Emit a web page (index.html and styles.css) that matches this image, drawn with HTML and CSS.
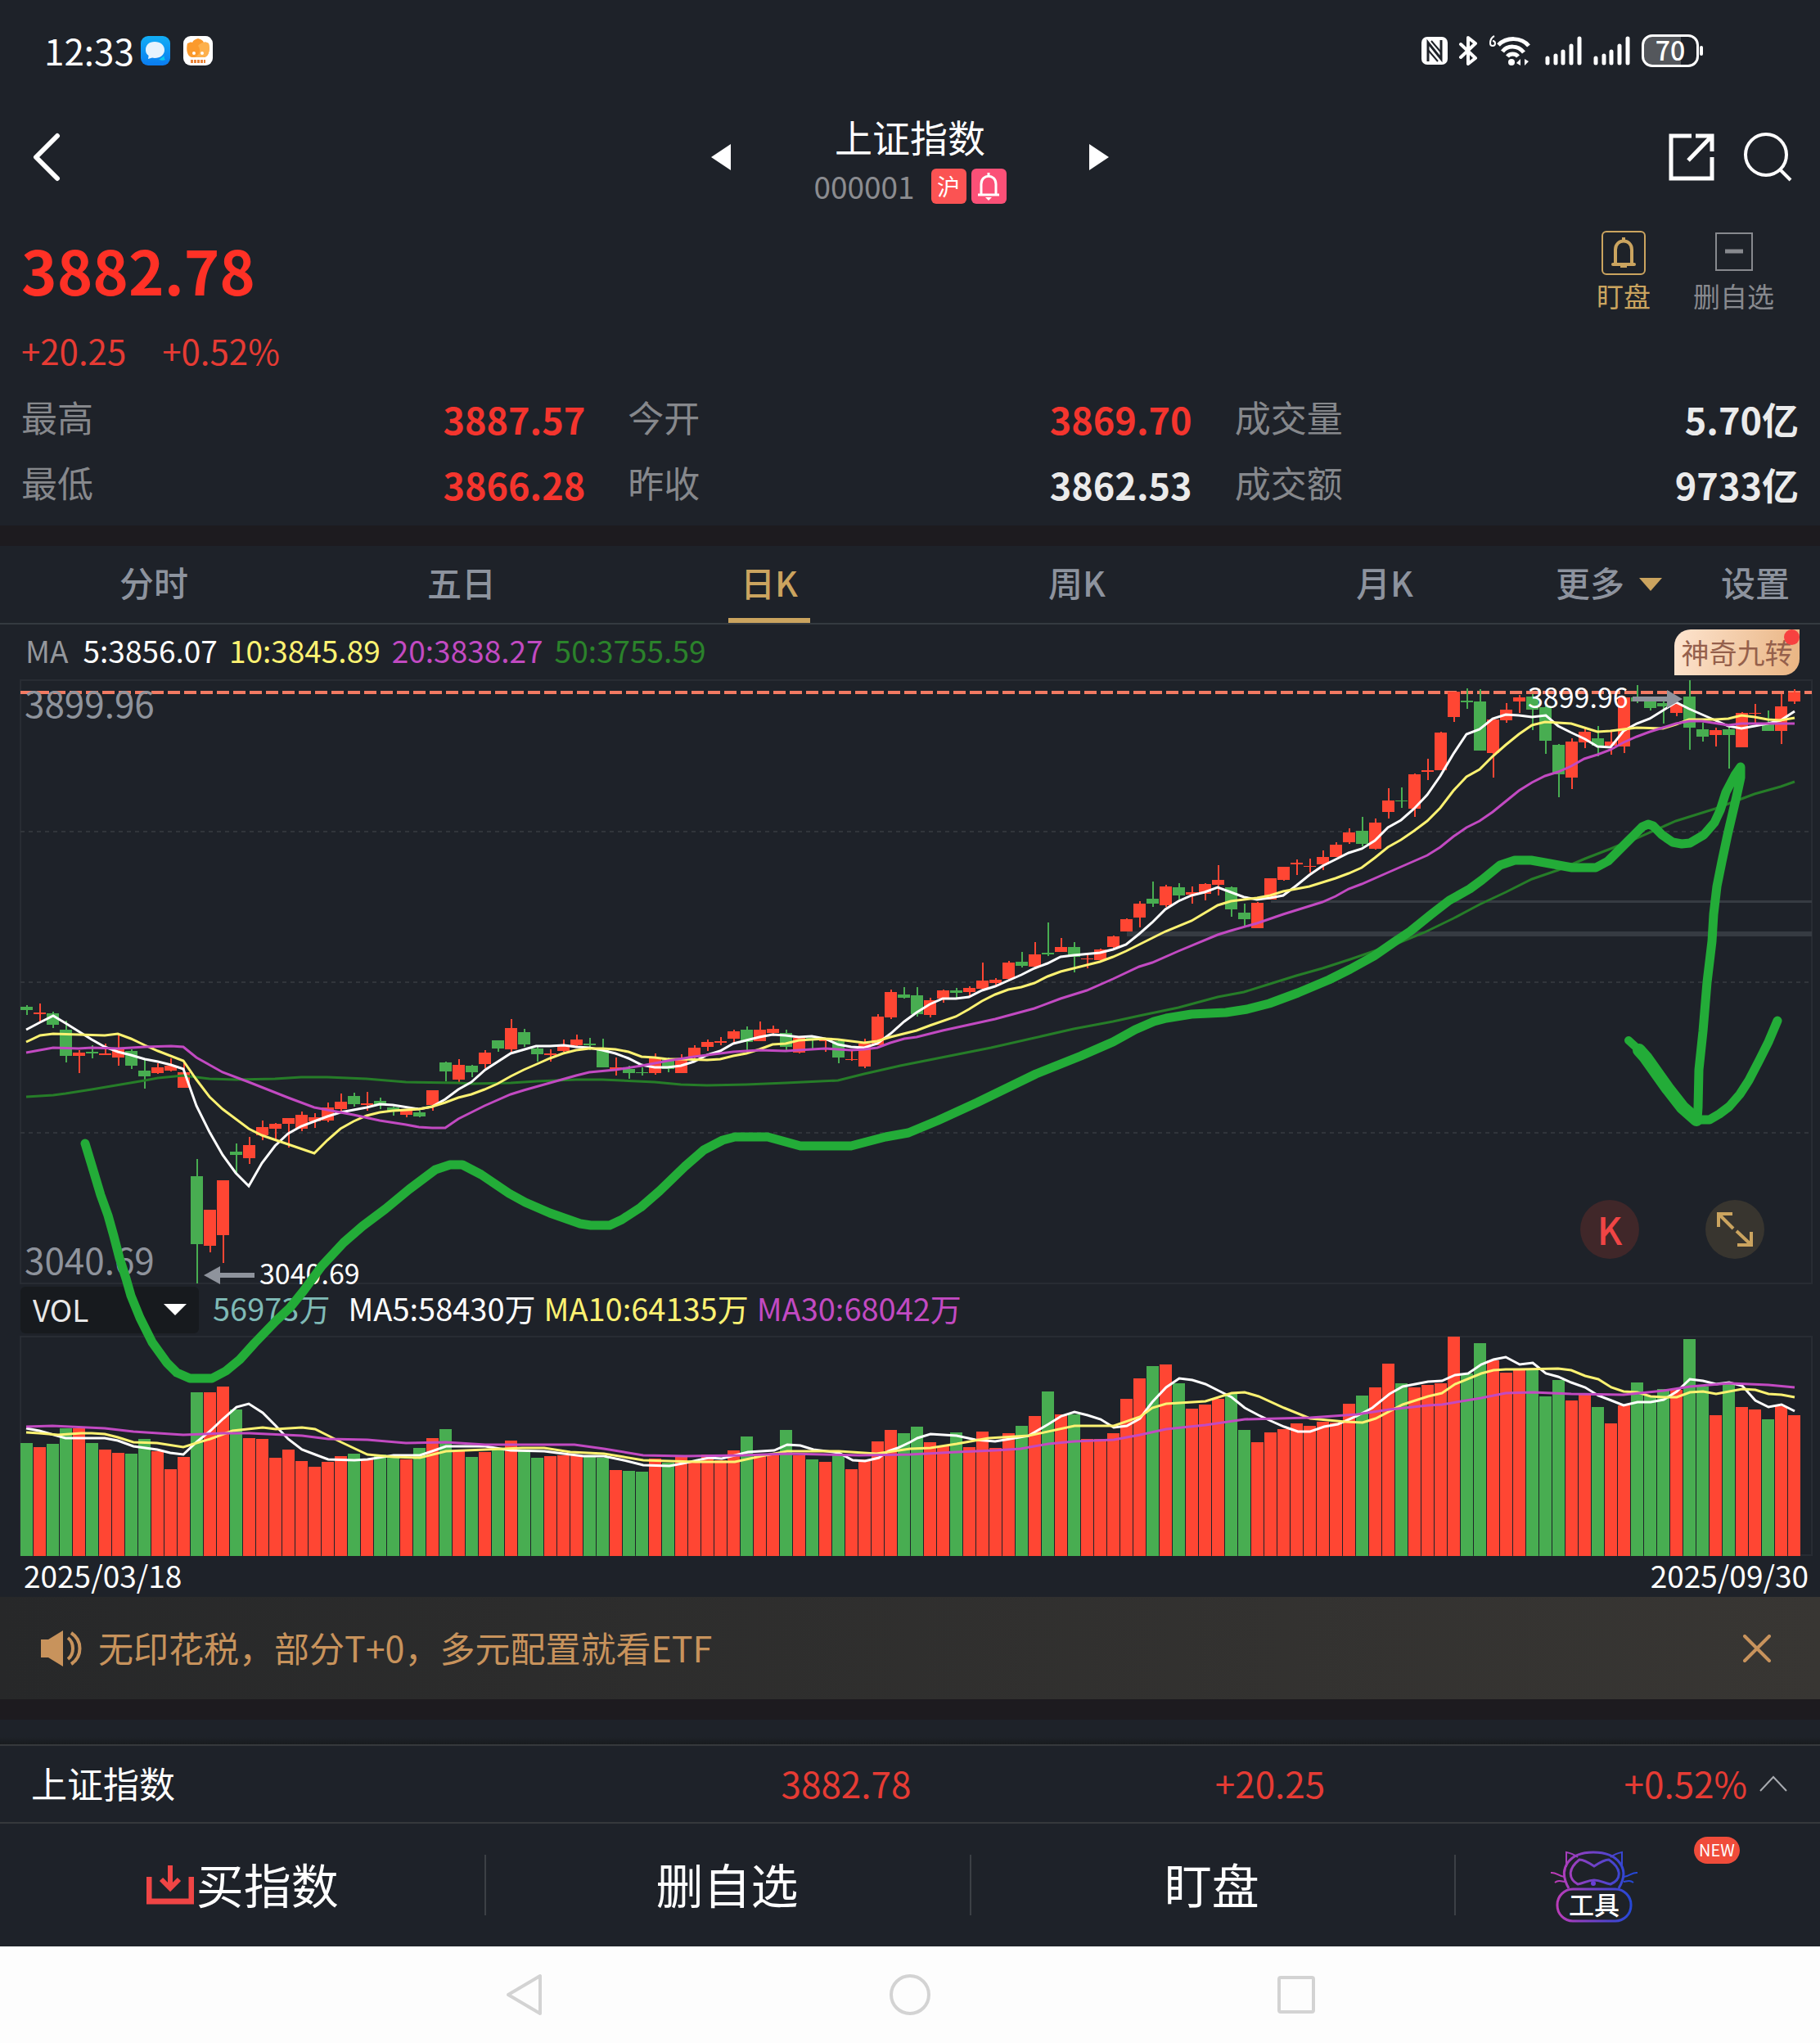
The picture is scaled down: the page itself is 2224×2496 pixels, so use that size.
FILE: index.html
```html
<!DOCTYPE html>
<html lang="zh-CN">
<head>
<meta charset="utf-8">
<meta name="viewport" content="width=device-width, initial-scale=1">
<title>上证指数 000001</title>
<link rel="stylesheet" href="styles.css">
</head>
<body>
<div class="status">
  <div class="status-group">
    <span class="clock">12:33</span>
    <svg class="app-icon" viewBox="0 0 36 36" aria-hidden="true">
      <defs><linearGradient id="msg" x1="0" y1="0" x2="0" y2="1"><stop offset="0" stop-color="#12aef5"/><stop offset="1" stop-color="#0a7cf0"/></linearGradient></defs>
      <rect width="36" height="36" rx="9" fill="url(#msg)"/>
      <path d="M22 29c4 1 6 1 8 0-1-1-2-3-1-5z" fill="#0cc8f0"/>
      <path d="M17 7c7 0 12 4 12 10s-5 10-12 10c-1 0-2 0-3-.4L9 28l.6-4C7 22 6 20 6 17 6 11 10 7 17 7z" fill="#e6f3fd"/>
    </svg>
    <svg class="app-icon" viewBox="0 0 36 36" aria-hidden="true">
      <rect width="36" height="36" rx="9" fill="#fff"/>
      <path d="M5 9c3-1 4-2 6-1 1-3 4-4 7-5 3 1 6 2 7 5 2-1 4 0 6 1 2 8 0 17-6 17H11C5 26 3 17 5 9z" fill="#fb9a2c"/>
      <path d="M18 12c4-5 9-5 13-3 2 8 0 17-6 17H14c6-3 8-9 4-14z" fill="#fdb04c"/>
      <circle cx="13" cy="21" r="2" fill="#fff"/><circle cx="23" cy="21" r="2" fill="#fff"/>
      <path d="M9 31h18" stroke="#e9843a" stroke-width="4" stroke-dasharray="3 1"/>
    </svg>
  </div>
  <div class="status-group status-right">
    <svg width="32" height="36" viewBox="0 0 32 36" aria-hidden="true"><rect y="1" width="32" height="34" rx="7" fill="#fff"/><path d="M8 31V8l16 20V5" fill="none" stroke="#1e2229" stroke-width="3"/><path d="M12 6l12 14M8 17l12 14" stroke="#1e2229" stroke-width="2"/></svg>
    <svg width="24" height="36" viewBox="0 0 24 36" fill="none" stroke="#fff" stroke-width="4" stroke-linejoin="round" stroke-linecap="round" aria-hidden="true"><path d="M3 10l18 17-9 7V2l9 7L3 26"/></svg>
    <svg width="56" height="38" viewBox="0 0 56 38" fill="none" stroke="#fff" stroke-width="5" aria-hidden="true"><path d="M7 1C3 3 2 6 2 10a3 3 0 1 0 3-3" stroke-width="2"/><path d="M12 12c10-10 28-10 37 1M17 20c6-8 19-8 26 1M23 26c3-4 10-4 13 0"/><circle cx="28" cy="33" r="4" fill="#fff" stroke="none"/><path d="M34 34l5-5v8zM49 32l-5 5v-8z" fill="#fff" stroke="none"/></svg>
    <svg width="46" height="36" viewBox="0 0 46 36" stroke="#fff" stroke-width="5" stroke-linecap="round" aria-hidden="true"><path d="M3 27v6M13 24v9M22 19v14M32 12v21M42 3v30"/></svg>
    <svg width="46" height="36" viewBox="0 0 46 36" stroke="#fff" stroke-width="5" stroke-linecap="round" aria-hidden="true"><path d="M3 27v6M13 24v9M22 19v14M32 12v21M42 3v30"/></svg>
    <span class="battery">70</span>
  </div>
</div>

<header class="header">
  <button class="icon-btn" aria-label="返回"><svg width="40" height="60" viewBox="-6 0 40 60" fill="none" stroke="#fff" stroke-width="6" stroke-linecap="round" stroke-linejoin="round"><path d="M30 4L4 30l26 26"/></svg></button>
  <div class="switcher">
    <button class="icon-btn" aria-label="上一个"><svg width="24" height="32" viewBox="0 0 24 32" fill="#fff"><path d="M24 0v32L0 16z"/></svg></button>
    <div class="name-block">
      <h1 class="name">上证指数</h1>
      <div class="code-row">
        <span class="code">000001</span>
        <span class="badges">
        <span class="market">沪</span>
        <span class="market alert"><svg width="32" height="36" viewBox="0 0 32 36" fill="none" stroke="#fff" stroke-width="3"><path d="M3 29h26M7 28V16c0-13 18-13 18 0v12"/><path d="M16 2v5"/><path d="M12 32h8l-4 4z" fill="#fff" stroke="none"/></svg></span>
        </span>
      </div>
    </div>
    <button class="icon-btn" aria-label="下一个"><svg width="24" height="32" viewBox="0 0 24 32" fill="#fff"><path d="M0 0v32l24-16z"/></svg></button>
  </div>
  <div class="header-tools">
    <button class="icon-btn" aria-label="分享"><svg width="58" height="60" viewBox="0 0 58 60" fill="none" stroke="#fff" stroke-width="5"><path d="M29 4H4v52h50V30M34 4h20v19M54 4L25 34"/></svg></button>
    <button class="icon-btn" aria-label="搜索"><svg width="60" height="60" viewBox="0 0 60 60" fill="none" stroke="#fff" stroke-width="4"><circle cx="28" cy="27" r="25"/><path d="M45 45l13 13"/></svg></button>
  </div>
</header>

<section class="quote">
  <div class="quote-top">
    <div>
      <div class="price">3882.78</div>
      <div class="change"><span>+20.25</span><span>+0.52%</span></div>
    </div>
    <div class="actions">
      <button class="action gold"><svg width="54" height="54" viewBox="0 0 54 54" fill="none" stroke="currentColor" stroke-width="4"><rect x="1" y="1" width="52" height="52" rx="5" stroke-width="2"/><path d="M14 41h26M17 40V23c0-14 20-14 20 0v17" stroke-linecap="round"/><path d="M27 8v5M23 43h8"/></svg>盯盘</button>
      <button class="action"><svg width="54" height="54" viewBox="0 0 54 54" fill="none" stroke="currentColor"><rect x="5" y="3" width="44" height="45" stroke-width="2"/><path d="M16 25h22" stroke-width="5"/></svg>删自选</button>
    </div>
  </div>
  <dl class="stats">
    <div class="stat"><dt>最高</dt><dd class="up">3887.57</dd></div>
    <div class="stat"><dt>今开</dt><dd class="up">3869.70</dd></div>
    <div class="stat"><dt>成交量</dt><dd>5.70亿</dd></div>
    <div class="stat"><dt>最低</dt><dd class="up">3866.28</dd></div>
    <div class="stat"><dt>昨收</dt><dd>3862.53</dd></div>
    <div class="stat"><dt>成交额</dt><dd>9733亿</dd></div>
  </dl>
</section>

<nav class="tabs">
  <button class="tab">分时</button>
  <button class="tab">五日</button>
  <button class="tab active">日K</button>
  <button class="tab">周K</button>
  <button class="tab">月K</button>
  <button class="tab">更多<svg class="caret" width="28" height="16" viewBox="0 0 28 16" fill="#cba45f"><path d="M0 0h28L14 16z"/></svg></button>
  <button class="tab settings">设置</button>
</nav>

<main class="chart">
  <div class="legend">
    <span class="muted">MA</span><span>5:3856.07</span><span class="yellow">10:3845.89</span><span class="purple">20:3838.27</span><span class="green">50:3755.59</span>
    <button class="magic">神奇九转<i class="dot"></i></button>
  </div>
  <div class="price-panel">
    <svg class="plot" id="price" viewBox="0 831 2224 737"></svg>
    <div class="float-tools">
      <button class="round round-k">K</button>
      <button class="round round-full" aria-label="全屏"><svg width="46" height="46" viewBox="0 0 46 46" fill="none" stroke="#cba45f" stroke-width="4"><path d="M3 20V4h17M4 5l17 17M25 25l17 16M26 42h17V26"/></svg></button>
    </div>
  </div>
  <div class="vol-head">
    <div class="vol-pick">
      <select class="vol-select" aria-label="指标"><option>VOL</option><option>MACD</option><option>KDJ</option></select>
      <svg class="vol-caret" width="28" height="14" viewBox="0 0 28 14" fill="#fff"><path d="M0 0h28L14 14z"/></svg>
    </div>
    <div class="vol-values"><span class="teal">56973万</span><span>MA5:58430万</span><span class="yellow">MA10:64135万</span><span class="purple">MA30:68042万</span></div>
  </div>
  <svg class="plot" id="volume" viewBox="0 1633 2224 268"></svg>
  <div class="dates"><time>2025/03/18</time><time>2025/09/30</time></div>
  <svg class="sketch" id="sketch" viewBox="0 763 2224 1188" aria-hidden="true"></svg>
</main>

<aside class="banner">
  <svg width="50" height="46" viewBox="0 0 50 46" fill="#c8935c"><path d="M0 12h9L27 1v44L9 34H0z"/><path d="M33 10c8 6 8 20 0 26M37 4c14 9 14 29 0 38" fill="none" stroke="#c8935c" stroke-width="4"/></svg>
  <a class="banner-link" href="#etf">无印花税，部分T+0，多元配置就看ETF</a>
  <button class="icon-btn" aria-label="关闭"><svg width="34" height="34" viewBox="0 0 34 34" stroke="#c8935c" stroke-width="4" stroke-linecap="round"><path d="M2 2l30 30M32 2L2 32"/></svg></button>
</aside>
<div class="spacer"></div>

<section class="ticker">
  <span class="ticker-name">上证指数</span><span class="mid">3882.78</span><span class="mid">+20.25</span>
  <span class="ticker-end">+0.52%<svg width="34" height="20" viewBox="0 0 34 20" fill="none" stroke="#a8abb0" stroke-width="2"><path d="M1 19L17 2l16 17"/></svg></span>
</section>

<footer class="dock">
  <button class="dock-btn"><svg width="58" height="50" viewBox="0 0 58 50" fill="none" stroke="#f04545" stroke-width="7"><path d="M3 16v30h52V16"/><path d="M29 2v26M18 19l11 11 11-11" stroke-width="6"/></svg>买指数</button>
  <button class="dock-btn">删自选</button>
  <button class="dock-btn">盯盘</button>
  <button class="dock-btn dock-tool">
    <svg width="106" height="88" viewBox="0 0 106 88" fill="none" stroke="url(#cat)" stroke-width="3">
      <defs><linearGradient id="cat" gradientUnits="userSpaceOnUse" x1="6" y1="0" x2="98" y2="0"><stop offset="0" stop-color="#bd3cb8"/><stop offset="1" stop-color="#2547d6"/></linearGradient></defs>
      <path d="M22 46C8 22 22 2 52 2s46 20 31 44"/>
      <path d="M19 20V2c6 1 10 3 14 6M87 20V2c-6 1-10 3-14 6" stroke-width="2"/>
      <path d="M35 11c6 0 12 4 18 8 6-4 12-8 18-8 16 11 16 24 2 30-8-1-12-5-20-5s-12 4-20 5C21 34 21 22 35 11z"/>
      <path d="M0 27c7-1 8 4 17 5M5 39c4-3 7-2 12-1M106 27c-7-1-8 4-17 5M101 39c-4-3-7-2-12-1" stroke-width="2"/>
      <circle cx="52" cy="40" r="3" fill="#6a3fd8" stroke="none"/>
      <rect x="8" y="47" width="90" height="39" rx="19"/>
      <text x="53" y="78" class="cat-text">工具</text>
    </svg>
    <span class="new">NEW</span>
  </button>
</footer>

<nav class="sysnav">
  <button class="icon-btn" aria-label="后退"><svg width="48" height="52" viewBox="0 0 48 52" fill="none" stroke="#d3d3d3" stroke-width="4" stroke-linejoin="round"><path d="M44 3v46L5 26z"/></svg></button>
  <button class="icon-btn" aria-label="主页"><svg width="50" height="52" viewBox="0 0 50 52" fill="none" stroke="#d3d3d3" stroke-width="4"><circle cx="25" cy="26" r="23"/></svg></button>
  <button class="icon-btn" aria-label="多任务"><svg width="48" height="52" viewBox="0 0 48 52" fill="none" stroke="#d3d3d3" stroke-width="4"><rect x="3" y="5" width="42" height="42" rx="2"/></svg></button>
</nav>
<script src="chart.js"></script>
</body>
</html>
```
FILE: styles.css
```css
* { box-sizing: border-box; }
body {
  margin: 0;
  background: #1e2229;
  color: #fff;
  font: 400 37px/1.3 "Noto Sans CJK SC", "Noto Sans", sans-serif;
}
button {
  margin: 0;
  padding: 0;
  border: 0;
  background: none;
  color: inherit;
  font: inherit;
}
svg { display: block; flex: none; }
.icon-btn { display: flex; }

.status {
  display: flex;
  justify-content: space-between;
  align-items: center;
  height: 124px;
  padding: 0 148px 0 54px;
}
.status-group { display: flex; align-items: center; gap: 16px; }
.status-right { gap: 13px; }
.clock { font-size: 44px; line-height: 54px; margin-right: -8px; padding-bottom: 2px; }
.app-icon { width: 36px; height: 36px; }
.battery {
  position: relative;
  width: 70px;
  height: 40px;
  border: 3px solid #fff;
  border-radius: 13px;
  background: linear-gradient(90deg, #54575c 70%, #1e2229 70%);
  font-size: 32px;
  font-weight: 500;
  line-height: 30px;
  text-align: center;
}
.battery::after {
  content: "";
  position: absolute;
  left: 68px;
  top: 11px;
  width: 4px;
  height: 12px;
  border-radius: 2px;
  background: #fff;
}

.header {
  display: grid;
  grid-template-columns: 1fr auto 1fr;
  align-items: center;
  height: 136px;
  padding: 0 34px;
}
.switcher { display: flex; align-items: center; justify-content: space-between; width: 486px; }
.name-block { display: flex; flex-direction: column; align-items: center; gap: 6px; }
.name { margin: 0; font-size: 46px; font-weight: 400; line-height: 64px; }
.code-row { display: flex; align-items: center; gap: 20px; height: 46px; color: #8b8c90; }
.code { line-height: 44px; }
.badges { display: flex; gap: 6px; }
.market {
  display: flex;
  align-items: center;
  justify-content: center;
  width: 43px;
  height: 43px;
  border-radius: 6px;
  background: #fb5353;
  color: #fff;
  font-size: 28px;
  line-height: 40px;
}
.alert { background: #fb5077; }
.header-tools { display: flex; justify-content: flex-end; gap: 34px; }

.quote { padding: 0 26px 10px; }
.quote-top { display: flex; justify-content: space-between; height: 212px; }
.price { padding-top: 25px; color: #ff3126; font-size: 74px; font-weight: 700; line-height: 88px; }
.change { display: flex; gap: 44px; margin-top: 25px; color: #e63b34; font-size: 42px; line-height: 60px; }
.actions { display: flex; gap: 52px; padding: 22px 30px 0 0; align-items: flex-start; }
.action {
  display: flex;
  flex-direction: column;
  align-items: center;
  gap: 6px;
  color: #87898e;
  font-size: 33px;
  line-height: 38px;
}
.action.gold { color: #cba45f; }
.stats {
  display: grid;
  grid-template-columns: repeat(3, 1fr);
  column-gap: 52px;
  margin: 0;
}
.stat { display: flex; justify-content: space-between; height: 80px; font-size: 44px; }
dt { color: #86888c; line-height: 75px; }
dd { margin: 0; color: #ebebeb; font-size: 45px; font-weight: 700; line-height: 79px; }
.up { color: #f4352e; }

.tabs {
  display: grid;
  grid-template-columns: repeat(5, 376fr) 172fr 172fr;
  height: 121px;
  border-top: 25px solid #1d1b1f;
  border-bottom: 2px solid #343a40;
}
.tab {
  position: relative;
  display: flex;
  align-items: center;
  justify-content: center;
  gap: 18px;
  padding-bottom: 5px;
  color: #8d939e;
  font-size: 42px;
  font-weight: 500;
}
.caret { margin-top: 4px; }
.settings { justify-content: flex-end; padding-right: 37px; }
.active { color: #cba45f; }
.active::after {
  content: "";
  position: absolute;
  bottom: 0;
  width: 100px;
  height: 6px;
  background: #cba45f;
}

.chart { position: relative; }
.legend { display: flex; align-items: center; gap: 14px; height: 68px; padding: 0 25px 0 31px; }
.legend span { padding-bottom: 5px; }
.muted { margin-right: 4px; color: #94979c; }
.yellow { color: #fdf272; }
.purple { color: #c24ac2; }
.green { color: #2b822b; }
.teal { margin-right: 12px; color: #7fbab6; }
.magic {
  position: relative;
  width: 153px;
  height: 56px;
  margin-left: auto;
  border-radius: 20px 0;
  background: linear-gradient(100deg, #fde4cf, #e9b482);
  color: #95604c;
  font-size: 34px;
  line-height: 52px;
}
.dot {
  position: absolute;
  top: 0;
  right: 0;
  width: 19px;
  height: 19px;
  border-radius: 50%;
  background: #f74140;
}
.plot { width: 100%; height: auto; overflow: visible; }
.price-panel { position: relative; }
.float-tools { position: absolute; right: 68px; bottom: 30px; display: flex; gap: 81px; }
.round {
  display: flex;
  align-items: center;
  justify-content: center;
  width: 72px;
  height: 72px;
  border-radius: 50%;
}
.round-k { background: #402729; color: #f04545; padding-bottom: 3px; font-size: 46px; font-weight: 500; line-height: 66px; }
.round-full { background: #38352f; }
.vol-head { display: flex; align-items: center; height: 65px; padding-left: 25px; }
.vol-pick { position: relative; margin-right: 17px; }
.vol-select {
  display: block;
  appearance: none;
  width: 218px;
  height: 57px;
  padding: 0 15px 2px;
  border: 0;
  border-radius: 6px;
  background: #171a1e;
  color: #e8e8e8;
  font: inherit;
}
.vol-caret { position: absolute; right: 15px; top: 21px; pointer-events: none; }
.vol-values { display: flex; gap: 10px; padding-bottom: 5px; font-size: 38px; }
.dates { display: flex; justify-content: space-between; height: 50px; padding: 0 14px 0 29px; line-height: 46px; }
.sketch { position: absolute; left: 0; top: 0; width: 100%; height: auto; pointer-events: none; }

.label { fill: #8e939c; font-size: 44px; }
.mark { fill: #fff; font-size: 34px; }

.banner {
  display: flex;
  align-items: center;
  gap: 20px;
  height: 125px;
  padding: 0 60px 0 50px;
  background: linear-gradient(90deg, #272829, #383633);
}
.banner-link { flex: 1; padding-bottom: 2px; color: #c8935c; font-size: 43px; text-decoration: none; }
.spacer { height: 55px; border-top: 25px solid #1d1b1f; background: linear-gradient(#1e2229 70%, #181b1e); }

.ticker {
  display: grid;
  grid-template-columns: 775fr 518fr 518fr 413fr;
  align-items: center;
  height: 97px;
  border: solid #36393c;
  border-width: 2px 0;
  padding-bottom: 2px;
  color: #e63b34;
  font-size: 44px;
}
.ticker-name { padding-left: 38px; color: #fff; }
.mid { text-align: center; }
.ticker-end { display: flex; align-items: center; justify-content: flex-end; gap: 15px; padding-right: 40px; }

.dock { display: grid; grid-template-columns: repeat(3, 592fr) 447fr; height: 150px; }
.dock-btn {
  position: relative;
  display: flex;
  align-items: center;
  justify-content: center;
  gap: 3px;
  padding-bottom: 2px;
  font-size: 58px;
}
.dock-btn + .dock-btn::before {
  content: "";
  position: absolute;
  left: 0;
  top: 38px;
  width: 2px;
  height: 74px;
  background: #3c4045;
}
.dock-btn.dock-tool { justify-content: flex-start; padding: 3px 0 0 118px; }
.cat-text { fill: #fff; stroke: none; font-size: 31px; font-weight: 500; text-anchor: middle; }
.new {
  position: absolute;
  right: 98px;
  top: 16px;
  width: 56px;
  height: 33px;
  border-radius: 17px;
  background: #f04c3a;
  font-size: 20px;
  line-height: 31px;
}

.sysnav {
  background: #fdfdfd;
  display: flex;
  justify-content: space-between;
  align-items: center;
  height: 118px;
  padding: 0 27.7%;
}
```
FILE: chart.js
```js
// One entry per trading day: colour (g = down, r = up), high, body top, body bottom, low.
const candles = `g1228,1230,1234,1240 r1226,1237,1239,1249 g1236,1238,1252,1256 g1247,1258,1290,1298 r1283,1286,1290,1311
g1277,1285,1287,1293 r1275,1287,1289,1289 r1263,1280,1292,1302 g1282,1284,1302,1306 g1295,1308,1315,1330
r1299,1304,1311,1312 r1293,1302,1308,1309 r1297,1310,1329,1329 g1416,1437,1520,1568 r1478,1478,1522,1530
r1442,1442,1509,1543 g1397,1407,1411,1433 r1389,1399,1415,1422 r1369,1377,1387,1393 r1372,1373,1379,1393
r1366,1366,1373,1402 r1358,1362,1379,1382 r1360,1365,1370,1378 r1347,1353,1369,1371 r1336,1346,1355,1357
g1335,1339,1349,1352 r1334,1348,1350,1357 g1341,1345,1350,1355 g1352,1353,1358,1363 r1355,1355,1362,1365
g1357,1359,1364,1365 r1332,1332,1350,1357 g1297,1298,1309,1321 r1294,1301,1319,1322 g1301,1302,1310,1316
r1283,1286,1300,1305 g1271,1271,1281,1285 r1245,1256,1282,1285 g1257,1261,1276,1279 g1279,1281,1288,1297
r1282,1287,1289,1297 r1270,1277,1284,1285 r1264,1270,1277,1278 g1268,1275,1277,1283 g1269,1282,1304,1304
r1292,1304,1306,1314 g1302,1306,1311,1318 g1304,1310,1311,1314 r1287,1293,1311,1313 g1292,1294,1306,1310
r1288,1293,1311,1311 r1277,1280,1292,1293 r1270,1273,1279,1284 r1267,1272,1274,1277 r1258,1260,1269,1275
g1254,1258,1273,1285 r1248,1258,1272,1272 r1253,1257,1262,1265 g1258,1262,1279,1283 r1268,1268,1286,1287
g1267,1268,1271,1282 r1268,1270,1272,1285 g1270,1272,1292,1299 r1282,1294,1295,1296 r1269,1275,1303,1305
r1239,1242,1277,1277 r1209,1212,1243,1245 g1206,1215,1219,1220 g1206,1216,1239,1242 r1219,1222,1240,1243
r1209,1210,1220,1225 g1207,1210,1213,1219 r1205,1207,1212,1217 r1176,1198,1208,1209 r1195,1197,1201,1203
r1174,1176,1196,1197 g1163,1175,1180,1182 r1151,1166,1181,1181 g1127,1164,1166,1168 r1146,1157,1163,1163
g1151,1157,1169,1188 r1165,1171,1172,1183 r1159,1160,1173,1173 r1143,1144,1157,1158 r1122,1123,1138,1138
r1101,1104,1121,1133 g1077,1098,1104,1108 r1081,1083,1106,1108 g1079,1084,1094,1099 r1083,1090,1093,1104
r1079,1080,1092,1100 r1057,1075,1081,1094 g1083,1084,1111,1120 g1104,1115,1123,1131 r1102,1103,1134,1134
r1073,1073,1099,1099 r1059,1059,1075,1076 r1050,1054,1056,1069 r1049,1058,1059,1066 r1039,1047,1056,1063
r1029,1032,1047,1047 r1012,1017,1029,1031 g998,1015,1031,1034 r1000,1005,1037,1038 r963,978,992,1000
g962,978,979,987 r945,946,988,998 r927,941,943,953 r894,895,941,941 r845,845,876,882
g841,856,858,866 g842,857,917,917 r878,879,920,950 r859,867,880,883 r849,852,857,871
g848,851,867,892 g862,864,905,921 g909,910,946,974 r902,906,950,964 r890,894,907,914
g887,902,911,924 r893,906,911,922 r851,852,912,920 g837,852,857,859 g853,855,865,868
g853,859,863,884 r857,860,871,875 g831,851,889,916 g883,891,900,906 r889,892,898,912
g885,891,898,939 r870,871,913,913 r860,871,872,883 g868,885,893,893 r848,863,893,909 r842,846,857,860`
  .split(/\s+/).map(s => ({ up: s[0] === 'r', v: s.slice(1).split(',').map(Number) }));

const volumes = [138,133,137,156,156,138,130,126,125,143,128,106,121,200,200,207,179,144,143,120,130,116,109,115,122,
  125,118,124,121,118,132,144,155,129,121,127,130,141,129,120,122,123,123,122,120,105,104,103,119,114,121,114,124,117,
  129,146,123,123,154,123,118,115,123,106,118,140,154,150,158,139,134,151,133,152,132,150,159,171,201,173,173,143,143,
  150,192,217,232,234,211,180,185,192,198,154,139,151,155,162,159,164,163,186,196,206,235,211,206,209,211,268,223,260,
  239,224,227,228,195,215,190,199,182,162,184,212,196,204,203,265,207,172,212,182,179,167,183,172];

const priceLines = {
  '#267d28': '32,1340 65,1338 80,1336 112,1331 177,1320 193,1317 224,1314 256,1318 288,1319 336,1318 368,1316 400,1316 448,1318 496,1322 560,1323 576,1324 624,1323 656,1321 704,1319 736,1319 800,1322 832,1325 864,1326 912,1325 960,1323 1024,1320 1056,1312 1100,1302 1211,1280 1264,1268 1312,1257 1360,1248 1392,1241 1440,1231 1488,1218 1520,1212 1552,1202 1584,1192 1616,1183 1650,1172 1679,1162 1709,1152 1741,1139 1776,1122 1808,1105 1840,1090 1872,1074 1904,1063 1937,1049 1968,1037 2000,1024 2048,1003 2096,988 2128,976 2144,970 2176,961 2193,955',
  '#fff': '32,1258 49,1249 65,1241 80,1250 96,1260 112,1270 128,1279 144,1285 160,1289 177,1294 193,1297 209,1301 224,1306 240,1351 256,1383 272,1411 288,1433 304,1449 320,1421 336,1400 352,1385 368,1376 384,1370 400,1364 416,1359 448,1353 464,1349 480,1350 512,1355 528,1352 544,1343 560,1331 576,1322 593,1307 624,1287 655,1278 672,1278 689,1277 704,1279 720,1280 736,1283 752,1287 768,1293 784,1301 800,1304 816,1304 832,1302 848,1297 864,1289 880,1284 896,1275 912,1271 928,1267 944,1264 960,1265 976,1267 992,1266 1008,1269 1024,1276 1040,1279 1056,1280 1072,1275 1088,1263 1105,1248 1120,1237 1136,1227 1152,1220 1168,1220 1184,1218 1200,1210 1216,1205 1232,1198 1248,1191 1264,1183 1280,1177 1296,1169 1312,1167 1344,1164 1360,1160 1376,1154 1392,1141 1408,1127 1424,1111 1440,1101 1456,1094 1472,1090 1488,1084 1504,1090 1520,1096 1536,1099 1552,1097 1568,1094 1584,1082 1600,1069 1616,1058 1632,1050 1648,1042 1664,1037 1680,1027 1696,1011 1712,1002 1728,988 1744,971 1760,948 1776,921 1792,897 1808,891 1824,878 1840,873 1856,874 1872,876 1889,874 1904,887 1920,895 1937,903 1952,912 1968,913 1984,893 2000,884 2016,878 2032,868 2048,858 2064,866 2080,873 2096,880 2112,887 2128,890 2144,887 2160,884 2176,880 2193,869',
  '#fdf272': '32,1273 49,1265 65,1263 128,1265 144,1263 160,1269 177,1277 193,1284 224,1296 240,1319 256,1340 272,1355 288,1367 304,1379 320,1387 352,1398 384,1409 400,1393 416,1379 432,1370 448,1363 464,1359 480,1357 512,1355 528,1352 544,1347 560,1341 576,1337 592,1331 608,1324 624,1315 640,1307 656,1300 672,1293 688,1287 704,1283 720,1281 736,1281 752,1282 768,1285 784,1291 800,1292 816,1294 832,1294 864,1295 880,1294 896,1290 912,1287 928,1282 944,1276 960,1275 976,1271 992,1270 1008,1269 1024,1270 1040,1272 1056,1274 1072,1272 1088,1267 1120,1259 1136,1253 1168,1242 1184,1233 1200,1223 1216,1215 1232,1209 1248,1206 1264,1201 1280,1193 1296,1187 1312,1183 1328,1179 1344,1175 1360,1169 1376,1162 1408,1146 1424,1138 1456,1125 1488,1106 1504,1101 1520,1099 1536,1097 1552,1094 1568,1089 1584,1086 1600,1083 1616,1078 1632,1073 1648,1067 1664,1060 1680,1048 1696,1035 1712,1026 1728,1015 1744,1003 1760,987 1776,966 1792,949 1808,940 1824,924 1840,910 1856,897 1872,886 1888,882 1904,883 1920,884 1936,889 1952,894 1968,893 1984,891 2000,889 2032,890 2048,885 2064,879 2096,879 2112,878 2128,874 2144,876 2160,879 2176,880 2193,877',
  '#c24ac2': '32,1286 65,1280 96,1281 112,1280 144,1281 177,1279 209,1278 224,1279 240,1292 256,1301 272,1310 304,1322 352,1341 384,1353 400,1356 432,1362 464,1369 496,1374 512,1377 528,1378 544,1378 560,1367 592,1351 624,1337 640,1332 672,1323 704,1314 720,1310 752,1307 784,1302 816,1296 848,1291 896,1285 928,1283 960,1284 1008,1281 1040,1283 1056,1282 1072,1280 1088,1274 1105,1269 1120,1267 1152,1259 1184,1252 1216,1245 1264,1232 1296,1220 1328,1210 1360,1196 1392,1181 1408,1176 1440,1162 1488,1142 1504,1137 1536,1128 1568,1117 1616,1102 1632,1095 1648,1086 1664,1080 1696,1066 1712,1059 1728,1052 1744,1045 1760,1035 1776,1022 1792,1011 1808,1003 1824,992 1840,979 1856,966 1872,956 1888,948 1904,943 1920,936 1936,927 1952,922 1968,916 1984,907 2000,900 2016,894 2032,889 2048,884 2064,881 2080,881 2112,886 2128,884 2193,884'
};

const volumeLines = {
  '#fff': '32,1745 48,1748 80,1757 128,1757 144,1760 163,1767 192,1771 208,1775 224,1777 240,1762 257,1748 273,1733 289,1719 304,1715 321,1726 337,1742 352,1758 369,1771 385,1777 401,1783 433,1784 449,1783 481,1778 513,1778 528,1773 545,1767 593,1767 624,1772 665,1773 697,1777 713,1779 738,1779 762,1784 786,1790 818,1791 834,1788 866,1781 882,1782 914,1774 946,1772 962,1765 978,1766 994,1771 1025,1775 1042,1784 1057,1785 1074,1781 1085,1773 1097,1769 1112,1762 1121,1757 1137,1752 1169,1754 1192,1759 1216,1761 1240,1757 1257,1754 1281,1740 1297,1730 1313,1725 1329,1729 1345,1734 1361,1744 1377,1742 1393,1733 1408,1713 1425,1695 1441,1684 1457,1686 1473,1691 1489,1699 1505,1707 1521,1720 1538,1729 1553,1736 1569,1743 1586,1749 1601,1749 1618,1743 1635,1740 1658,1730 1677,1720 1698,1703 1714,1694 1745,1688 1762,1687 1778,1680 1794,1678 1810,1667 1825,1661 1840,1658 1857,1667 1873,1665 1889,1678 1904,1682 1920,1689 1937,1695 1953,1705 1969,1711 1984,1717 2001,1713 2017,1713 2033,1710 2049,1700 2065,1685 2081,1687 2097,1691 2113,1689 2129,1693 2145,1711 2161,1719 2177,1716 2193,1724',
  '#fdf272': '32,1750 48,1751 71,1753 99,1751 112,1751 128,1752 144,1756 163,1762 192,1763 224,1768 240,1763 257,1758 284,1748 321,1744 337,1746 369,1744 385,1746 417,1762 449,1777 481,1780 513,1781 545,1773 593,1771 638,1769 665,1769 697,1774 738,1776 786,1784 850,1786 898,1786 930,1779 962,1773 1025,1773 1071,1776 1112,1770 1137,1769 1169,1764 1208,1757 1257,1754 1313,1742 1361,1742 1393,1731 1408,1720 1425,1715 1473,1712 1505,1702 1521,1701 1538,1706 1569,1720 1601,1733 1644,1737 1665,1738 1681,1733 1714,1716 1745,1706 1762,1702 1778,1691 1810,1678 1825,1674 1840,1673 1857,1673 1904,1672 1920,1674 1937,1681 1953,1685 1969,1695 1984,1700 2001,1701 2017,1706 2033,1707 2049,1707 2065,1701 2081,1700 2097,1703 2129,1697 2145,1698 2161,1703 2177,1704 2193,1707',
  '#c24ac2': '32,1743 64,1742 128,1745 163,1749 224,1753 273,1751 305,1751 369,1754 401,1758 449,1759 496,1763 545,1762 593,1765 702,1765 738,1770 786,1778 837,1779 908,1778 962,1776 1050,1778 1112,1777 1169,1774 1216,1772 1247,1770 1281,1764 1313,1761 1361,1759 1393,1753 1425,1746 1473,1741 1521,1734 1601,1732 1658,1728 1698,1722 1745,1717 1762,1716 1810,1708 1840,1702 1873,1701 1920,1703 1984,1704 2033,1699 2065,1694 2113,1690 2161,1692 2193,1695'
};

const PITCH = 16, LEFT = 25, RIGHT = 2214;
const colour = up => (up ? '#ff4633' : '#48ad51');
const rect = (x, y, w, h, fill) => `<rect x="${x}" y="${y}" width="${w}" height="${h}" fill="${fill}"/>`;
const lines = set => Object.entries(set).map(([c, p]) =>
  `<polyline points="${p}" fill="none" stroke="${c}" stroke-width="3"/>`).join('');
const frame = (top, bottom) =>
  `<rect x="${LEFT}" y="${top}" width="${RIGHT - LEFT}" height="${bottom - top}" fill="none" stroke="#282c33" stroke-width="2"/>`;

document.getElementById('price').innerHTML =
  frame(831, 1568) +
  [1016, 1200, 1384].map(y => `<path d="M${LEFT} ${y}H${RIGHT}" stroke="#31353b" stroke-width="2" stroke-dasharray="5 5"/>`).join('') +
  rect(1553, 1100, RIGHT - 1553, 3, '#363b42') +
  rect(1377, 1138, RIGHT - 1377, 6, '#363b42') +
  `<path d="M${LEFT} 846H${RIGHT}" stroke="#f27a62" stroke-width="4" stroke-dasharray="15 5"/>` +
  candles.map(({ up, v: [high, top, bottom, low] }, i) => {
    const x = LEFT + i * PITCH;
    return rect(x + 7, high, 2, low - high, colour(up)) + rect(x, top, 15, bottom - top, colour(up));
  }).join('') +
  lines(priceLines) +
  `<text class="label" x="30" y="877">3899.96</text>
   <text class="label" x="30" y="1557">3040.69</text>
   <path d="M249 1558l20-11v8h42v6h-42v8z" fill="#8e939c"/>
   <text class="mark" x="317" y="1569">3040.69</text>
   <path d="M2056 854l-19-11v8h-42v6h42v8z" fill="#8e939c"/>
   <text class="mark" x="1867" y="865">3899.96</text>`;

document.getElementById('volume').innerHTML =
  frame(1633, 1900) +
  volumes.map((h, i) => rect(LEFT + i * PITCH, 1901 - h, 15, h, colour(candles[i].up))).join('') +
  lines(volumeLines);

const strokes = [
  [11, '104,1397 114,1430 123,1460 132,1485 139,1510 146,1537 154,1562 160,1583 171,1610 186,1640 204,1665 216,1677 232,1684 259,1684 276,1675 293,1661 311,1641 337,1614 354,1598 371,1577 393,1547 420,1518 443,1498 471,1477 500,1453 532,1429 550,1423 565,1423 588,1435 622,1458 642,1469 672,1482 709,1495 722,1497 745,1497 760,1490 783,1475 806,1455 837,1425 860,1405 883,1393 898,1389 938,1389 978,1400 1040,1400 1059,1395 1082,1389 1110,1384 1146,1369 1194,1347 1266,1312 1321,1290 1360,1273 1387,1258 1410,1248 1425,1244 1456,1239 1498,1237 1524,1233 1551,1226 1586,1213 1624,1197 1650,1184 1679,1168 1705,1150 1723,1138 1749,1117 1771,1100 1796,1086 1811,1075 1833,1057 1851,1051 1871,1051 1888,1054 1921,1060 1950,1060 1965,1052 1990,1027 2007,1010 2014,1007 2020,1009 2031,1020 2044,1029 2055,1031 2065,1030 2082,1020 2095,1005 2102,990 2109,968 2120,947 2127,937 2127,950 2122,973 2111,1020 2104,1053 2098,1083 2094,1117 2092,1150 2086,1200 2081,1260 2076,1307 2075,1353 2074,1368 2089,1368 2101,1361 2113,1352 2126,1337 2137,1320 2150,1295 2161,1273 2172,1247'],
  [10, '1990,1271 2001,1281'],
  [16, '2003,1283 2011,1292 2038,1330 2056,1353 2073,1368']
];
document.getElementById('sketch').innerHTML = strokes.map(([w, p]) =>
  `<polyline points="${p}" fill="none" stroke="#23ac38" stroke-width="${w}" stroke-linecap="round" stroke-linejoin="round"/>`).join('');
```
